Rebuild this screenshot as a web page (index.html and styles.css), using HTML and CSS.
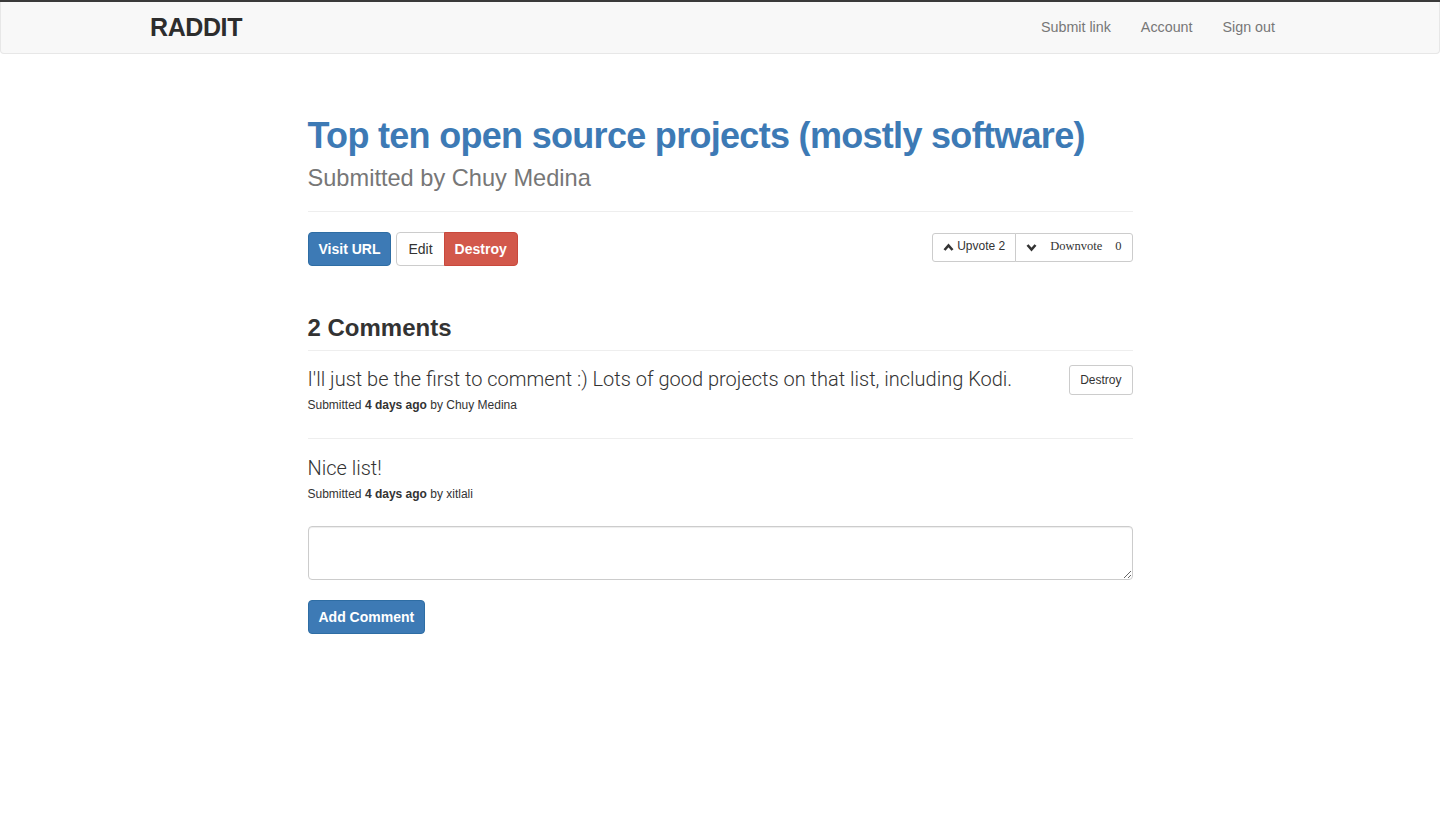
FILE: index.html
```html
<!DOCTYPE html>
<html>
<head>
<meta charset="utf-8">
<title>Raddit</title>
<link rel="stylesheet" href="styles.css">
</head>
<body>
<nav class="navbar">
  <div class="nav-inner">
    <a class="brand" href="#">RADDIT</a>
    <ul class="nav-links">
      <li><a href="#">Submit link</a></li>
      <li><a href="#">Account</a></li>
      <li><a href="#">Sign out</a></li>
    </ul>
  </div>
</nav>

<main class="content">
  <header class="page-header">
    <h1 class="title"><a href="#">Top ten open source projects (mostly software)</a></h1>
    <div class="subtitle">Submitted by Chuy Medina</div>
  </header>

  <div class="actions">
    <div class="left-actions">
      <a class="btn btn-primary" href="#">Visit URL</a>
      <div class="btn-pair">
        <a class="btn btn-default btn-left" href="#">Edit</a>
        <a class="btn btn-danger btn-right" href="#">Destroy</a>
      </div>
    </div>
    <div class="vote-group">
      <a class="vote vote-up" href="#">
        <svg class="chev" width="11" height="9" viewBox="0 0 11 9"><polyline points="1.5,7 5.5,2.5 9.5,7" fill="none" stroke="#333" stroke-width="2.6"/></svg>
        <span>Upvote 2</span>
      </a>
      <a class="vote vote-down" href="#">
        <svg class="chev" width="11" height="9" viewBox="0 0 11 9"><polyline points="1.5,2 5.5,6.5 9.5,2" fill="none" stroke="#333" stroke-width="2.6"/></svg>
        <span class="serif">Downvote</span>
        <span class="serif count">0</span>
      </a>
    </div>
  </div>

  <h3 class="comments-heading">2 Comments</h3>

  <div class="comment">
    <div class="comment-body">
      <p class="comment-text">I'll just be the first to comment :) Lots of good projects on that list, including Kodi.</p>
      <p class="meta">Submitted <strong>4 days ago</strong> by Chuy Medina</p>
    </div>
    <a class="btn btn-default btn-sm" href="#">Destroy</a>
  </div>

  <div class="comment last">
    <div class="comment-body">
      <p class="comment-text">Nice list!</p>
      <p class="meta">Submitted <strong>4 days ago</strong> by xitlali</p>
    </div>
  </div>

  <form class="comment-form">
    <textarea class="form-control"></textarea>
    <button type="button" class="btn btn-primary">Add Comment</button>
  </form>
</main>
</body>
</html>
```

FILE: styles.css
```css
* { box-sizing: border-box; }

html, body {
  margin: 0;
  padding: 0;
  background: #fff;
}

body {
  font-family: "Liberation Sans", Arial, sans-serif;
  font-size: 14px;
  line-height: 1.42857;
  color: #333;
  border-top: 2px solid #3a3a3a;
}

a { text-decoration: none; }

.navbar {
  height: 52px;
  background: #f8f8f8;
  border: 1px solid #e7e7e7;
  border-top: none;
  border-radius: 0 0 4px 4px;
}

.nav-inner {
  width: 1170px;
  margin: 0 auto;
  padding: 0 15px;
  height: 51px;
  display: flex;
  align-items: center;
  justify-content: space-between;
}

.brand {
  font-size: 25px;
  font-weight: bold;
  color: #2d2d2d;
  letter-spacing: -0.4px;
  line-height: 51px;
}

.nav-links {
  list-style: none;
  margin: 0;
  padding: 0;
  display: flex;
}

.nav-links a {
  display: block;
  padding: 0 15px;
  line-height: 51px;
  font-size: 14.3px;
  color: #777;
}

.content {
  width: 825px;
  margin: 0 auto;
  padding-bottom: 40px;
}

.page-header {
  margin-top: 62px;
  padding-bottom: 19px;
  border-bottom: 1px solid #eee;
}

.title {
  margin: 0;
  font-size: 36px;
  font-weight: bold;
  line-height: 1.1;
  letter-spacing: -0.7px;
}

.title a { color: #3d7ab5; }

.subtitle {
  margin-top: 10px;
  font-size: 23.6px;
  line-height: 1.1;
  color: #777;
}

.actions {
  margin-top: 20px;
  display: flex;
  justify-content: space-between;
  align-items: flex-start;
}

.left-actions {
  display: flex;
  gap: 5px;
}

.btn-pair { display: flex; }

.btn {
  display: inline-block;
  height: 34px;
  padding: 0 10px;
  font-family: "Liberation Sans", Arial, sans-serif;
  font-size: 14px;
  line-height: 32px;
  border: 1px solid transparent;
  border-radius: 4px;
  cursor: pointer;
  white-space: nowrap;
}

.btn-primary {
  background: #3d7ab5;
  border-color: #2e6da4;
  color: #fff;
  font-weight: bold;
}

.btn-danger {
  background: #d2584b;
  border-color: #c9483c;
  color: #fff;
  font-weight: bold;
}

.btn-default {
  background: #fff;
  border-color: #ccc;
  color: #333;
  padding: 0 11px;
}

.btn-left { border-radius: 4px 0 0 4px; }
.btn-right { border-radius: 0 4px 4px 0; margin-left: -1px; }

.btn-sm {
  height: 30px;
  line-height: 28px;
  padding: 0 10px;
  font-size: 12px;
  border-radius: 3px;
}

.vote-group {
  display: flex;
  margin-top: 1px;
}

.vote {
  display: flex;
  align-items: center;
  height: 29px;
  border: 1px solid #ccc;
  background: #fff;
  color: #333;
  font-size: 12px;
}

.vote-up {
  padding: 0 10px 0 10px;
  gap: 3px;
  border-radius: 3px 0 0 3px;
}

.vote-down {
  margin-left: -1px;
  padding: 0 10px 0 10px;
  border-radius: 0 3px 3px 0;
}

.vote-down .chev { margin-right: 13px; }

.serif {
  font-family: "Liberation Serif", "Times New Roman", serif;
  font-size: 12.5px;
  color: #333;
}

.count { margin-left: 13px; }

.comments-heading {
  margin: 49px 0 0;
  padding-bottom: 9px;
  font-size: 24px;
  font-weight: bold;
  line-height: 1.1;
  border-bottom: 1px solid #eee;
}

.comment {
  display: flex;
  justify-content: space-between;
  align-items: flex-start;
  padding: 14px 0 24px;
  border-bottom: 1px solid #eee;
}

.comment.last {
  border-bottom: none;
  padding-top: 15px;
  padding-bottom: 23px;
}

.comment-text {
  margin: 0;
  font-family: Roboto, "Liberation Sans", sans-serif;
  font-weight: 300;
  font-size: 20px;
  line-height: 1.4;
  color: #333;
}

.meta {
  margin: 4px 0 0;
  font-size: 12px;
  line-height: 1.4;
  color: #333;
}

.meta strong { font-weight: bold; }

.comment-form {
  margin-top: 0;
  display: flex;
  flex-direction: column;
  align-items: flex-start;
  gap: 20px;
}

.form-control {
  display: block;
  width: 100%;
  height: 54px;
  border: 1px solid #ccc;
  border-radius: 4px;
  box-shadow: inset 0 1px 1px rgba(0,0,0,0.075);
  font-family: "Liberation Sans", Arial, sans-serif;
  font-size: 14px;
  padding: 6px 12px;
  resize: vertical;
}
```
